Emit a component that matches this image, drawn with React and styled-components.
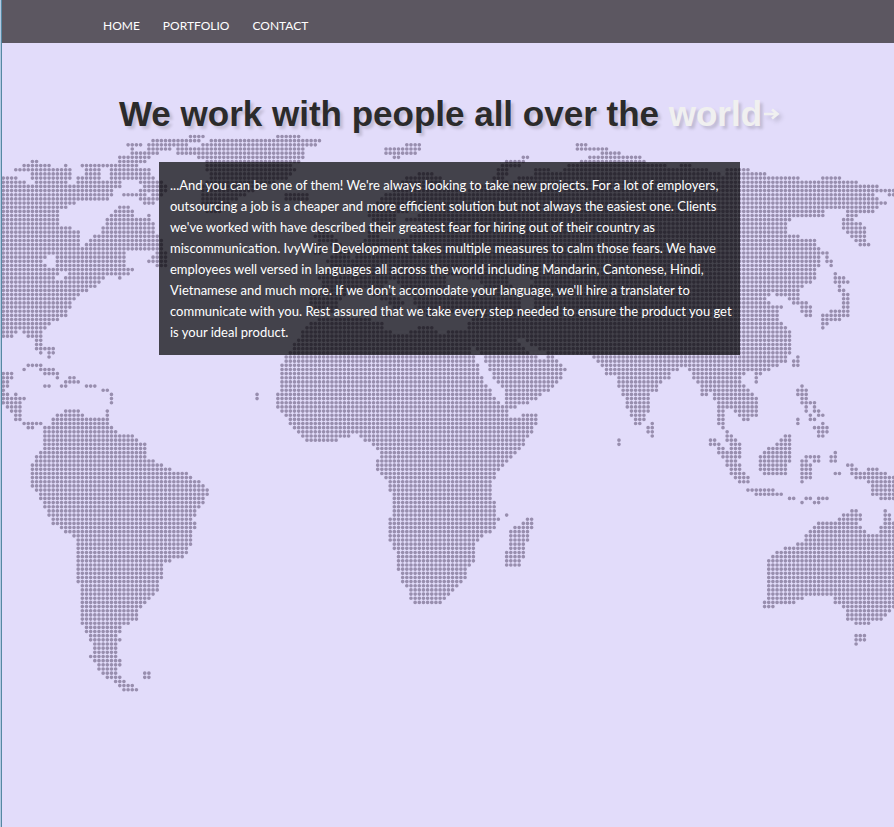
import React from "react";
import styled, { createGlobalStyle } from "styled-components";

const GlobalStyle = createGlobalStyle`
  * { box-sizing: border-box; }
  body {
    margin: 0;
    background: #e2dcfa;
    border-left: 1px solid #b2c9e2;
  }
`;

const Page = styled.div`
  min-height: 100vh;
  display: flex;
  flex-direction: column;
  border-left: 1px solid #5688a3;
  font-family: Lato, "Open Sans", sans-serif;
`;

const NavBar = styled.nav`
  background: #5c5761;
  height: 43px;
  padding: 8px 101px 0;
  display: flex;
  align-items: center;
  gap: 23px;
`;

const NavLink = styled.a`
  color: #fff;
  font-size: 12px;
  line-height: 20px;
  text-decoration: none;
`;

const Hero = styled.main`
  flex: 1;
  display: grid;
  overflow: hidden;
`;

const MapArt = styled.svg`
  grid-area: 1 / 1;
  width: 100%;
  height: auto;
  display: block;
`;

const Content = styled.div`
  grid-area: 1 / 1;
  z-index: 1;
  display: flex;
  flex-direction: column;
  align-items: center;
  padding: 49px 0 0 3px;
`;

const Title = styled.h1`
  margin: 0 0 26px;
  display: flex;
  align-items: center;
  white-space: pre;
  font: bold 35px/44px "Liberation Sans", Arial, sans-serif;
  color: #2b2b2b;
  text-shadow: 3px 3px 3px rgba(0, 0, 0, 0.15);
`;

const Accent = styled.span`
  color: #f0f0f0;
`;

const Arrow = styled.svg`
  width: 18px;
  height: 16px;
  filter: drop-shadow(3px 3px 2px rgba(0, 0, 0, 0.15));
`;

const Panel = styled.section`
  width: 100%;
  max-width: 581px;
  padding: 13px 6px 12px 11px;
  background: rgba(0, 0, 0, 0.7);
`;

const Copy = styled.p`
  margin: 0;
  color: #fff;
  font-size: 13px;
  line-height: 21px;
`;

/* One entry per row of dots; every "a-b" is a run of columns that is land. */
const LAND = [
  "45-48 66-71",
  "36-47 50-76",
  "30-33 35-44 48-75 97-100 138-140",
  "31 35-40 42-72 92-100 138-145",
  "31-37 42-72 92-99 144-148",
  "28-35 47-72 94-95 125-126 141-153",
  "7-8 28-34 49-71 121-125 139-154",
  "5-11 15 19-32 49-69 120-124 136-159 163-165",
  "3-16 20-23 26-35 49-70 119-121 128-131 135-169 174-179",
  "7-16 20-23 26-35 50-69 100-103 119-121 128-172 174-183",
  "0-3 7-16 18-23 26-36 50-68 97-105 118-120 124-191 197-201",
  "0-5 8-15 18-28 33-38 49-65 96-106 118-121 123-205",
  "0-28 34-39 48-62 95-108 113-210",
  "0-26 33-39 48-60 94-110 112-215",
  "0-26 29-34 36-38 48-58 68-73 92-209 213-215",
  "0-25 33-37 48-56 68-73 91-210",
  "0-17 34-36 48-54 90-212",
  "0-15 28-30 49-53 88-98 101-210",
  "0-13 27-31 49-52 88-97 101-197 203-209",
  "0-13 26-31 35 88-94 100-197 203-205",
  "0-13 25-35 89-94 97-189 202-204",
  "0-13 25-36 90-94 101-188 202-206",
  "0-16 24-36 88-90 92-94 100-188 202-207",
  "0-18 24-36 76-78 88-90 99-188 203-207",
  "0-18 22-37 75-79 88-90 98-191 204-207",
  "0-18 21-38 76-80 87-195 205-207",
  "0-18 20-38 75-76 79-81 86-195 206-208",
  "0-38 75-77 80-82 85-196",
  "0-29 37-39 75-76 80-83 85-196 197-198",
  "0-10 13-29 36-39 79-83 85-196 198",
  "0-9 13-29 35-39 78-196 198-199",
  "0-10 13-29 37-39 79-196 199",
  "0-31 78-195",
  "0-13 16-30 76-121 126-195 200",
  "0-12 15-24 28 76-106 112-121 127-195 200-202",
  "0-23 77-92 95-106 115-121 128-194 200-203",
  "0-22 77-91 96-106 116-122 127-192 201",
  "0-20 74-84 88-92 96-106 117-122 127-191 201-202",
  "0-18 74-82 89-93 98-123 127-184 186-191 202-203",
  "0-17 74-81 91-95 99-124 128-183 189-191 202-203",
  "0-16 74-80 93-96 99-124 128-184 190-193 202-203",
  "0-16 74-80 94-95 100-124 128-187 192-194 202-203",
  "0-15 75-79 101-103 106-186 192-194 199-203",
  "0-15 92-94 102-103 112-186 193-194 197-203",
  "0-13 76-88 113-186 197-201",
  "0-11 74-91 112-187 197-198",
  "0-10 73-91 100-103 112-188 197",
  "0-3 5-9 72-93 98-104 107-189",
  "0-2 6-9 72-189",
  "8-9 71-123 126-189",
  "8-9 70-124 127-189",
  "8-12 70-112 114-125 129-189",
  "9 11-12 69-112 115-126 131-189",
  "11 68-113 116-128 131-132 142-188 191",
  "68-113 116-133 143-188 190-191",
  "6-9 67-114 117-134 144-186 190-191",
  "5 9-12 67-114 117-135 145-162 165-184",
  "0-2 10-13 67-114 118-134 145-160 166-178 181-182",
  "0-2 13 16-17 67-115 118-134 148-160 166-177 181",
  "0-1 15-18 67-115 119-133 148-158 167-177 181",
  "0-1 10-11 14-15 20-22 67-116 120-132 148-157 168-178 192",
  "0 24-25 67-117 121-131 149-157 168-179 191-193",
  "0-1 3 26 61 66-117 121-129 149-155 168-169 171-180 191-193",
  "0-5 26 61 66-118 121-128 150-155 171-181 192-193",
  "0-4 26 66-119 121-126 150-155 172-181 192-195",
  "1-4 66-123 150-155 172-181 193 195",
  "2-4 15-18 25 67-121 151-155 172-173 176-181 193 195-196",
  "3-4 13-19 25 68-121 125-128 151-154 172-173 177-181 194 196-197",
  "3-4 12-25 69-128 152-154 172-173 178-179 191 194-195",
  "5-9 12-25 69-128 152-153 156 172-173 191 197",
  "6-7 10-26 70-127 155-156 173 195-198",
  "10-27 71-127 155-156 174 196-198",
  "10-31 72-83 86-126 156 174-175 188-189 196-197",
  "10-32 73-80 87-125 148 170-171 174-176 187-189",
  "10-34 89-125 148 170-172 175-177 186-189",
  "10-34 90-124 172-173 175-177 184-189",
  "9-34 91-123 172-177 183-189 200",
  "8-34 91-122 173-177 182-189 193-196 199-200",
  "8-36 90-121 174-176 182-189 192-193 195-196 199-200",
  "7-38 90-120 174-177 182-188 192-194 203-204",
  "7-40 90-119 175-177 182-188 192-194 204-205 208-210",
  "7-44 91-118 175-178 183-188 192-194 200-201 204-212",
  "7-45 92-118 176-179 192-194 205-214",
  "7-47 93-117 177-179 192 208-214",
  "7-48 93-117 209-214",
  "8-49 93-117 179-185 209-214",
  "9-49 94-117 181-187 209-214",
  "9-48 94-117 189-190 193-194 196-198 211-214",
  "10-48 94-118 192 195-196",
  "10-47 94-118",
  "11-46 94-118 204-205 212",
  "11-46 94-118 121 202-206 212-213",
  "12-45 93-119 126-127 201-206 212-213",
  "12-46 93-118 125-127 196-205 212-214",
  "14-46 93-118 123-127 195-206 211-214",
  "15-45 93-117 122-126 194-207 211-214",
  "17-45 93-115 122-126 193-214",
  "18-45 93-114 122-126 193-214",
  "18-45 94-113 122-125 191-214",
  "18-44 94-113 122-125 188-214",
  "18-44 95-113 121-125 186-214",
  "18-43 95-113 121-125 185-214",
  "18-40 95-113 121-124 184-214",
  "18-38 95-112 121-124 184-214",
  "18-38 95-111 184-214",
  "18-38 96-111 184-214",
  "18-38 96-111 184-214",
  "18-37 96-110 184-214",
  "19-37 97-109 184-214",
  "19-37 98-108 184-214",
  "19-36 98-107 184-214",
  "19-35 98-106 184-192 200-214",
  "19-34 99-105 183-190 200-214",
  "19-33 183-185 202-214",
  "19-32 203-213",
  "19-32 203-212",
  "19-32 203-211",
  "19-30 205-208",
  "20-28",
  "20-28",
  "21-27 205-207",
  "21-28 205-207",
  "22-27 205",
  "22-27",
  "22-27",
  "21-27",
  "22-28",
  "23-28",
  "23-27",
  "24-27 34-35",
  "25-28 34-35",
  "27-29",
  "28-31",
  "29-32",
];

const mapPath = LAND.map((row, y) =>
  row
    .split(" ")
    .map((run) => {
      const [from, to = from] = run.split("-").map(Number);
      return `M${from} ${y}h${to - from + 0.2}`;
    })
    .join("")
).join("");

function WorldMap() {
  return (
    <MapArt viewBox="0 0 892 784" aria-hidden="true">
      <path
        d={mapPath}
        transform="translate(1.3 93.5) scale(4.16)"
        fill="none"
        stroke="#988eae"
        strokeWidth="0.88"
        strokeLinecap="round"
        strokeDasharray="0 1"
      />
    </MapArt>
  );
}

export default function App() {
  return (
    <Page>
      <GlobalStyle />
      <NavBar>
        <NavLink href="#home">HOME</NavLink>
        <NavLink href="#portfolio">PORTFOLIO</NavLink>
        <NavLink href="#contact">CONTACT</NavLink>
      </NavBar>
      <Hero>
        <WorldMap />
        <Content>
          <Title>
            We work with people all over the <Accent>world</Accent>
            <Arrow viewBox="0 0 18 16" aria-hidden="true">
              <path
                d="M2 8H15M10 3.5L15.5 8L10 12.5"
                fill="none"
                stroke="#f0f0f0"
                strokeWidth="2.6"
              />
            </Arrow>
          </Title>
          <Panel>
            <Copy>
              ...And you can be one of them! We're always looking to take new
              projects. For a lot of employers, outsourcing a job is a cheaper
              and more efficient solution but not always the easiest one.
              Clients we've worked with have described their greatest fear for
              hiring out of their country as miscommunication. IvyWire
              Development takes multiple measures to calm those fears. We have
              employees well versed in languages all across the world including
              Mandarin, Cantonese, Hindi, Vietnamese and much more. If we don't
              accomodate your language, we'll hire a translater to communicate
              with you. Rest assured that we take every step needed to ensure
              the product you get is your ideal product.
            </Copy>
          </Panel>
        </Content>
      </Hero>
    </Page>
  );
}
